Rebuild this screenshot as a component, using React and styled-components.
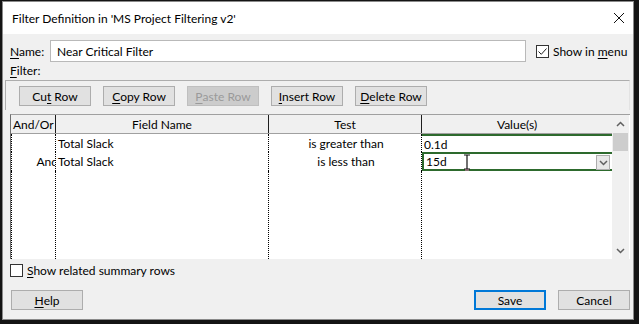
import React from "react";
import styled, { createGlobalStyle } from "styled-components";

const GlobalStyle = createGlobalStyle`
  html, body {
    margin: 0;
    padding: 0;
    background: #141414;
  }
  body {
    font-family: Lato, "Liberation Sans", sans-serif;
    font-size: 12px;
    color: #000;
  }
`;

const Screen = styled.div`
  width: 639px;
  height: 324px;
  box-sizing: border-box;
  padding: 1px 5px 4px 2px;
  background: #141414;
`;

const Dialog = styled.div`
  width: 632px;
  height: 319px;
  box-sizing: border-box;
  border: 1px solid #8a8a8a;
  background: #f0f0f0;
  display: flex;
  flex-direction: column;
`;

const TitleBar = styled.div`
  height: 32px;
  flex-shrink: 0;
  background: #fff;
  display: flex;
  align-items: center;
  justify-content: space-between;
  padding: 0 8px 0 9px;
`;

const Close = styled.div`
  width: 12px;
  height: 12px;
  display: flex;
`;

const Body = styled.div`
  flex: 1;
  padding: 0 3px 0 2px;
  display: flex;
  flex-direction: column;
`;

const NameRow = styled.div`
  display: flex;
  align-items: center;
  padding-left: 5px;
  margin-top: 6px;
  height: 22px;
`;

const Label = styled.span`
  width: ${(p) => p.width || "auto"};
  flex-shrink: 0;
`;

const TextInput = styled.div`
  width: 476px;
  flex-shrink: 0;
  height: 22px;
  box-sizing: border-box;
  border: 1px solid #b9b9b9;
  background: #fff;
  padding: 0 6px;
  display: flex;
  align-items: center;
`;

const CheckLabel = styled.label`
  display: flex;
  align-items: center;
  gap: 4px;
  white-space: nowrap;
  margin-left: ${(p) => p.offset || "0"};
`;

const Box = styled.span`
  width: 13px;
  height: 13px;
  flex-shrink: 0;
  box-sizing: border-box;
  border: 1px solid #333;
  background: #fff;
  display: flex;
  align-items: center;
  justify-content: center;
`;

const FilterLabel = styled.div`
  padding-left: 5px;
  height: 18px;
  line-height: 18px;
`;

const Toolbar = styled.div`
  height: 30px;
  flex-shrink: 0;
  box-sizing: border-box;
  border: 1px solid #adadad;
  border-right-color: #e3e3e3;
  border-bottom: none;
  display: flex;
  align-items: flex-start;
  gap: 12px;
  padding: 5px 0 0 13px;
`;

const Button = styled.div`
  width: 72px;
  height: 20px;
  flex-shrink: 0;
  box-sizing: border-box;
  border: ${(p) => (p.primary ? "2px solid #0078d7" : "1px solid #adadad")};
  background: ${(p) => (p.disabled ? "#cccccc" : "#e1e1e1")};
  color: ${(p) => (p.disabled ? "#9a9a9a" : "#000")};
  border-color: ${(p) => (p.disabled ? "#bfbfbf" : undefined)};
  display: flex;
  align-items: center;
  justify-content: center;
  white-space: nowrap;
`;

const Grid = styled.div`
  margin: 4px 0 0 5px;
  height: 145px;
  flex-shrink: 0;
  box-sizing: border-box;
  border-top: 1px solid #a0a0a0;
  border-left: 1px solid #6f6f6f;
  display: flex;
  background: #fff;
`;

const Table = styled.div`
  width: 601px;
  display: flex;
  flex-direction: column;
`;

const Cols = "45px 213px 153px 190px";

const HeaderRow = styled.div`
  display: grid;
  grid-template-columns: ${Cols};
  height: 18px;
  background: #f0f0f0;
  border-bottom: 1px solid #a0a0a0;
`;

const HeadCell = styled.div`
  display: flex;
  align-items: center;
  justify-content: ${(p) => p.align || "center"};
  border-right: ${(p) => (p.last ? "none" : "1px solid #1e1e1e")};
  padding-left: ${(p) => p.pad || "0"};
  white-space: nowrap;
`;

const Rows = styled.div`
  flex: 1;
  display: grid;
  grid-template-columns: ${Cols};
  grid-template-rows: 18px 19px 1fr;
`;

const Cell = styled.div`
  display: flex;
  align-items: center;
  justify-content: ${(p) => p.align || "flex-start"};
  padding-left: 2px;
  border-right: ${(p) => (p.last ? "none" : "1px dotted #000")};
  border-left: ${(p) => (p.first ? "1px dotted #000" : "none")};
  overflow: hidden;
  white-space: nowrap;
  box-sizing: border-box;
  position: relative;
`;

const RowMark = styled.span`
  position: absolute;
  left: -1px;
  top: 0;
  bottom: 0;
  width: 1px;
  background: #2e7d32;
`;

const Clip = styled.span`
  margin-right: -3px;
`;

const ValueCell = styled.div`
  display: flex;
  align-items: center;
  box-sizing: border-box;
  padding-left: 2px;
  border-top: 2px solid #2d6a2d;
  border-left: ${(p) => (p.active ? "2px solid #2d6a2d" : "none")};
  border-bottom: ${(p) => (p.active ? "2px solid #2d6a2d" : "none")};
  position: relative;
`;

const DropBtn = styled.div`
  position: absolute;
  right: 2px;
  top: 1px;
  width: 14px;
  height: 15px;
  box-sizing: border-box;
  border: 1px solid #adadad;
  background: #e8e8e8;
  display: flex;
  align-items: center;
  justify-content: center;
`;

const Caret = styled.svg`
  position: absolute;
  left: 39px;
  top: 0px;
`;

const Filler = styled.div`
  border-right: ${(p) => (p.last ? "none" : "1px dotted #000")};
  border-left: ${(p) => (p.first ? "1px dotted #000" : "none")};
`;

const Scrollbar = styled.div`
  width: 17px;
  background: #f0f0f0;
  display: flex;
  flex-direction: column;
  align-items: center;
`;

const Arrow = styled.div`
  height: 17px;
  width: 17px;
  display: flex;
  align-items: center;
  justify-content: center;
`;

const Thumb = styled.div`
  width: 15px;
  height: 18px;
  background: #cdcdcd;
  margin-top: 1px;
`;

const Track = styled.div`
  flex: 1;
`;

const SummaryRow = styled.div`
  margin: 5px 0 0 5px;
  height: 13px;
  display: flex;
  align-items: center;
`;

const Footer = styled.div`
  display: flex;
  align-items: center;
  padding: 0 0 0 6px;
  margin-top: 13px;
`;

const Spacer = styled.div`
  flex: 1;
`;

const FooterButtons = styled.div`
  display: flex;
  gap: 12px;
`;

const U = styled.span`
  text-decoration: underline;
  text-underline-offset: 2px;
`;

function Chevron({ up }) {
  return (
    <svg width="9" height="6" viewBox="0 0 9 6">
      <path
        d={up ? "M1 5 L4.5 1.5 L8 5" : "M1 1 L4.5 4.5 L8 1"}
        fill="none"
        stroke="#606060"
        strokeWidth="1.5"
      />
    </svg>
  );
}

export default function App() {
  return (
    <>
      <GlobalStyle />
      <Screen>
        <Dialog>
          <TitleBar>
            <span>Filter Definition in 'MS Project Filtering v2'</span>
            <Close>
              <svg width="12" height="12" viewBox="0 0 12 12">
                <path d="M1 1 L11 11 M11 1 L1 11" stroke="#111" strokeWidth="1" />
              </svg>
            </Close>
          </TitleBar>
          <Body>
            <NameRow>
              <Label width="40px">
                <U>N</U>ame:
              </Label>
              <TextInput>Near Critical Filter</TextInput>
              <CheckLabel offset="10px">
                <Box>
                  <svg width="11" height="11" viewBox="0 0 11 11">
                    <path d="M1.5 5.5 L4.3 8.3 L9.5 2.5" fill="none" stroke="#222" strokeWidth="1" />
                  </svg>
                </Box>
                <span>
                  Show in <U>m</U>enu
                </span>
              </CheckLabel>
            </NameRow>
            <FilterLabel>
              <U>F</U>ilter:
            </FilterLabel>
            <Toolbar>
              <Button>
                Cu<U>t</U>&nbsp;Row
              </Button>
              <Button>
                <U>C</U>opy Row
              </Button>
              <Button disabled>
                <U>P</U>aste Row
              </Button>
              <Button>
                <U>I</U>nsert Row
              </Button>
              <Button>
                <U>D</U>elete Row
              </Button>
            </Toolbar>
            <Grid>
              <Table>
                <HeaderRow>
                  <HeadCell align="flex-start" pad="2px">And/Or</HeadCell>
                  <HeadCell>Field Name</HeadCell>
                  <HeadCell>Test</HeadCell>
                  <HeadCell last>Value(s)</HeadCell>
                </HeaderRow>
                <Rows>
                  <Cell first />
                  <Cell>Total Slack</Cell>
                  <Cell align="center">is greater than</Cell>
                  <ValueCell>0.1d</ValueCell>

                  <Cell first align="flex-end">
                    <RowMark />
                    <Clip>And</Clip>
                  </Cell>
                  <Cell>Total Slack</Cell>
                  <Cell align="center">is less than</Cell>
                  <ValueCell active>
                    15d
                    <Caret width="8" height="17" viewBox="0 0 8 17">
                      <path d="M1 1 H7 M4 1 V15 M1 15 H7" stroke="#111" strokeWidth="1.2" fill="none" />
                      <path d="M2 16 H6" stroke="#e07ab8" strokeWidth="1" />
                    </Caret>
                    <DropBtn>
                      <Chevron />
                    </DropBtn>
                  </ValueCell>

                  <Filler first />
                  <Filler />
                  <Filler />
                  <Filler last />
                </Rows>
              </Table>
              <Scrollbar>
                <Arrow>
                  <Chevron up />
                </Arrow>
                <Thumb />
                <Track />
                <Arrow>
                  <Chevron />
                </Arrow>
              </Scrollbar>
            </Grid>
            <SummaryRow>
              <CheckLabel>
                <Box />
                <span>
                  <U>S</U>how related summary rows
                </span>
              </CheckLabel>
            </SummaryRow>
            <Footer>
              <Button>
                <U>H</U>elp
              </Button>
              <Spacer />
              <FooterButtons>
                <Button primary>Save</Button>
                <Button>Cancel</Button>
              </FooterButtons>
            </Footer>
          </Body>
        </Dialog>
      </Screen>
    </>
  );
}
